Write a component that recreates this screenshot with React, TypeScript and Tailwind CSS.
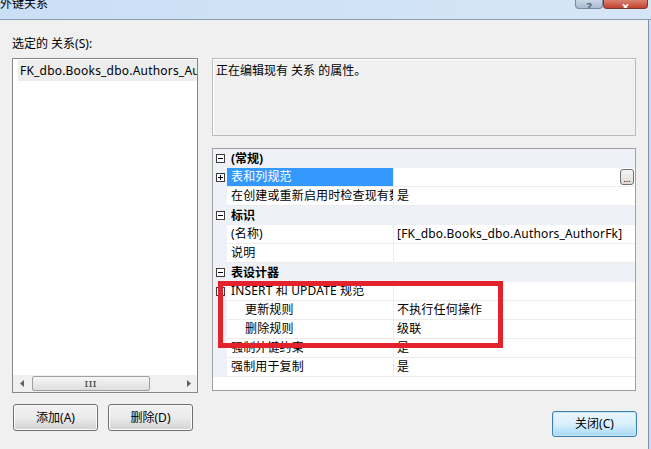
import React from 'react';

type Row = {
  kind: 'cat' | 'item';
  label: string;
  value?: string;
  expander?: 'plus' | 'minus';
  indent?: boolean;
  selected?: boolean;
  button?: boolean;
};

const rows: Row[] = [
  { kind: 'cat', label: '(常规)' },
  { kind: 'item', label: '表和列规范', expander: 'plus', selected: true, button: true },
  { kind: 'item', label: '在创建或重新启用时检查现有数据', value: '是' },
  { kind: 'cat', label: '标识' },
  { kind: 'item', label: '(名称)', value: '[FK_dbo.Books_dbo.Authors_AuthorFk]' },
  { kind: 'item', label: '说明', value: '' },
  { kind: 'cat', label: '表设计器' },
  { kind: 'item', label: 'INSERT 和 UPDATE 规范', expander: 'minus' },
  { kind: 'item', label: '更新规则', value: '不执行任何操作', indent: true },
  { kind: 'item', label: '删除规则', value: '级联', indent: true },
  { kind: 'item', label: '强制外键约束', value: '是' },
  { kind: 'item', label: '强制用于复制', value: '是' },
];

const Expander = ({ type }: { type: 'plus' | 'minus' }) => (
  <svg width="9" height="9" viewBox="0 0 9 9" className="block">
    <rect x="0.5" y="0.5" width="8" height="8" fill="#fff" stroke="#3c3c3c" />
    <line x1="2" y1="4.5" x2="7" y2="4.5" stroke="#000" />
    {type === 'plus' && <line x1="4.5" y1="2" x2="4.5" y2="7" stroke="#000" />}
  </svg>
);

const Arrow = ({ dir }: { dir: 'left' | 'right' }) => (
  <svg width="4" height="7" viewBox="0 0 4 7" className="block">
    {dir === 'left' ? <path d="M4 0 L0 3.5 L4 7 Z" fill="#606060" /> : <path d="M0 0 L4 3.5 L0 7 Z" fill="#606060" />}
  </svg>
);

const WinButton = ({ children, primary }: { children: React.ReactNode; primary?: boolean }) => (
  <div
    className={
      'flex h-full w-full items-center justify-center rounded-[3px] border text-[12px] text-black ' +
      (primary
        ? 'border-[#3c7fb1] bg-gradient-to-b from-[#eaf6fd] via-[#d9f0fc] to-[#a7d9f5] shadow-[inset_0_0_0_1px_#c5e6f8]'
        : 'border-[#707070] bg-gradient-to-b from-[#f2f2f2] via-[#ebebeb] to-[#d2d2d2] shadow-[inset_0_0_0_1px_#fcfcfc]')
    }
  >
    {children}
  </div>
);

const PropertyGrid = () => (
  <div className="relative mt-[12px] flex h-[243px] flex-col border border-[#a0a0a0] bg-white">
    {rows.map((r, i) =>
      r.kind === 'cat' ? (
        <div key={i} className="flex h-[19px] items-center bg-[#eef2f8]">
          <div className="flex w-[14px] justify-end pr-[2px]">
            <Expander type="minus" />
          </div>
          <div className="pl-[4px] font-bold">{r.label}</div>
        </div>
      ) : (
        <div key={i} className="flex h-[19px]">
          <div className="flex w-[14px] items-center justify-end bg-[#eef2f8] pr-[2px]">
            {r.expander && <Expander type={r.expander} />}
          </div>
          <div
            className={
              'flex w-[167px] items-center overflow-hidden whitespace-nowrap border-b border-r border-[#ececec] ' +
              (r.indent ? 'pl-[18px] ' : 'pl-[4px] ') +
              (r.selected ? 'bg-[#3399ff] text-white' : '')
            }
          >
            <span className="block max-w-[162px] overflow-hidden tracking-[0.15px]">{r.label}</span>
          </div>
          <div className="flex flex-1 items-center justify-between overflow-hidden whitespace-nowrap border-b border-[#ececec] pl-[3px]">
            <span className="tracking-[0.18px]">{r.value}</span>
            {r.button && (
              <div className="mr-[1px] flex h-[16px] w-[14px] items-end justify-center rounded-[3px] border border-[#707070] bg-gradient-to-b from-[#f6f6f6] to-[#dcdcdc] pb-[1px] text-[9px] leading-[9px]">
                ...
              </div>
            )}
          </div>
        </div>
      )
    )}
    <div className="pointer-events-none absolute left-[5px] top-[132px] h-[67px] w-[285px] border-[5px] border-[#e3222b]" />
  </div>
);

export default function App() {
  return (
    <div className="flex h-[449px] w-[651px] flex-col overflow-hidden bg-[#f0f0f0] font-['Noto_Sans','Noto_Sans_CJK_SC',sans-serif] text-[12px] leading-[16px] text-black">
      <div className="flex h-[20px] items-start border-b border-[#8b9db3] bg-gradient-to-r from-[#cadff5] to-[#d6e6f7]">
        <div className="-mt-[3px] text-[12px] leading-[14px]">外键关系</div>
        <div className="ml-auto mr-[3px] flex">
          <div className="flex h-[9px] w-[28px] items-end justify-center overflow-hidden rounded-b-[4px] border border-t-0 border-[#7a8aa0] bg-gradient-to-b from-[#c9d6e6] to-[#a9bbd2] text-[11px] font-bold leading-[11px] text-[#56687e]">
            <span className="-mb-[4px]">?</span>
          </div>
          <div className="flex h-[9px] w-[45px] items-end justify-center overflow-hidden rounded-b-[4px] border border-t-0 border-[#7a3a34] bg-gradient-to-b from-[#d9816f] to-[#c3412f] text-[14px] font-bold leading-[12px] text-white">
            <span className="-mb-[5px]">×</span>
          </div>
        </div>
      </div>
      <div className="flex flex-1">
        <div className="flex flex-1 bg-[#f0f0f0]">
          <div className="ml-[12px] flex w-[186px] flex-col">
            <div className="h-[38px] pt-[16px]">选定的 关系(S):</div>
            <div className="flex h-[335px] flex-col border border-[#828790] bg-white">
              <div className="ml-[5px] mt-[1px] flex h-[21px] items-center overflow-hidden whitespace-nowrap bg-[#ededed] pl-[2px] tracking-[0.2px]">
                FK_dbo.Books_dbo.Authors_AuthorFk
              </div>
              <div className="flex-1" />
              <div className="flex h-[17px] items-center bg-[#f0f0f0]">
                <div className="flex w-[17px] justify-center">
                  <Arrow dir="left" />
                </div>
                <div className="ml-[2px] flex h-[15px] w-[118px] items-center justify-center rounded-[2px] border border-[#a0a0a0] bg-gradient-to-b from-[#f6f6f6] to-[#dedede] text-[8px] font-bold leading-[8px] tracking-[1px] text-[#555]">
                  III
                </div>
                <div className="flex-1" />
                <div className="flex w-[17px] justify-center">
                  <Arrow dir="right" />
                </div>
              </div>
            </div>
            <div className="ml-[1px] mt-[11px] flex h-[27px] gap-[10px]">
              <div className="w-[85px]">
                <WinButton>添加(A)</WinButton>
              </div>
              <div className="w-[85px]">
                <WinButton>删除(D)</WinButton>
              </div>
            </div>
          </div>
          <div className="ml-[14px] flex w-[424px] flex-col pt-[38px]">
            <div className="h-[78px] border border-[#bcbcbc] bg-[#f0f0f0] px-[3px] pt-[4px] shadow-[inset_1px_1px_0_#ffffff]">
              正在编辑现有 关系 的属性。
            </div>
            <PropertyGrid />
            <div className="-mr-[1px] mt-[20px] h-[26px] w-[85px] self-end">
              <WinButton primary>关闭(C)</WinButton>
            </div>
          </div>
        </div>
        <div className="w-[3px] border-l border-[#7f93ab] bg-[#c9dcf2]" />
      </div>
    </div>
  );
}
